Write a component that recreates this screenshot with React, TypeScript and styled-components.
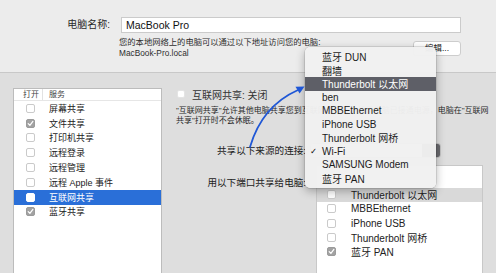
import React from "react";
import styled, { createGlobalStyle } from "styled-components";

const FONT = `"Liberation Sans", "Noto Sans CJK SC", sans-serif`;

const Global = createGlobalStyle`
  html, body { margin: 0; padding: 0; background: #dedede; }
  body { font-family: ${FONT}; }
`;

const Window = styled.div`
  position: relative;
  width: 496px;
  height: 273px;
  overflow: hidden;
  display: flex;
  flex-direction: column;
  font-family: ${FONT};
  color: #222;
  background: #dedede;
`;

const Top = styled.div`
  flex: none;
  height: 73px;
  box-sizing: border-box;
  padding-top: 17px;
  background: #ececec;
  border-bottom: 1px solid #c8c8c8;
  display: grid;
  grid-template-columns: 121px 340px;
  grid-template-rows: 16px auto;
  row-gap: 4px;
`;

const NameLabel = styled.div`
  text-align: right;
  padding-right: 11px;
  font-size: 10px;
  line-height: 16px;
  color: #2a2a2a;
`;

const TextField = styled.div`
  box-sizing: border-box;
  background: #fff;
  border: 1px solid #cbcbcb;
  padding-left: 4px;
  font-size: 10.5px;
  line-height: 14px;
  color: #111;
`;

const AddressRow = styled.div`
  grid-column: 2;
  margin-left: -2px;
  display: flex;
  justify-content: space-between;
  align-items: flex-start;
`;

const AddressText = styled.div`
  font-size: 8.3px;
  line-height: 11px;
  color: #2e2e2e;
`;

const EditButton = styled.div`
  margin-top: 4px;
  width: 48px;
  height: 15px;
  box-sizing: border-box;
  background: #fff;
  border: 1px solid #cdcdcd;
  border-radius: 3px;
  font-size: 8.5px;
  line-height: 13px;
  text-align: center;
  color: #222;
`;

const Bottom = styled.div`
  flex: 1;
  display: flex;
  align-items: flex-start;
  padding: 15px 0 0 13px;
`;

const ServiceList = styled.div`
  flex: none;
  width: 149px;
  height: 200px;
  box-sizing: border-box;
  background: #fff;
  border: 1px solid #bcbcbc;
`;

const ListHeader = styled.div`
  display: flex;
  height: 12px;
  box-sizing: border-box;
  border-bottom: 1px solid #e6e6e6;
  font-size: 8px;
  line-height: 11px;
  color: #444;
`;

const HeaderCell = styled.div<{ $w?: number; $pad: number; $divider?: boolean }>`
  width: ${(p) => (p.$w ? `${p.$w}px` : "auto")};
  padding-left: ${(p) => p.$pad}px;
  box-sizing: border-box;
  border-right: ${(p) => (p.$divider ? "1px solid #e2e2e2" : "none")};
`;

const ServiceRow = styled.div<{ $selected?: boolean }>`
  display: flex;
  align-items: center;
  height: 14.8px;
  padding-left: 12px;
  background: ${(p) => (p.$selected ? "#2a6fd8" : "transparent")};
  color: ${(p) => (p.$selected ? "#fff" : "#222")};
  font-size: 9px;
`;

const RowLabel = styled.span<{ $gap: number }>`
  margin-left: ${(p) => p.$gap}px;
  white-space: nowrap;
`;

const Box = styled.span<{ $checked?: boolean; $onBlue?: boolean; $size: number; $faint?: boolean }>`
  flex: none;
  display: inline-flex;
  align-items: center;
  justify-content: center;
  width: ${(p) => p.$size}px;
  height: ${(p) => p.$size}px;
  box-sizing: border-box;
  border-radius: 2px;
  background: ${(p) => (p.$checked ? "#a2a2a2" : "#fff")};
  border: 1px solid
    ${(p) =>
      p.$onBlue ? "#fff" : p.$checked ? "#9b9b9b" : p.$faint ? "#e4e4e4" : "#cacaca"};
`;

const Check = () => (
  <svg width="7" height="7" viewBox="0 0 7 7">
    <path d="M1.2 3.6 L2.9 5.3 L5.9 1.4" fill="none" stroke="#fff" strokeWidth="1.2" strokeLinecap="round" strokeLinejoin="round" />
  </svg>
);

const RightPane = styled.div`
  margin-left: 14px;
  width: 307px;
  display: flex;
  flex-direction: column;
`;

const TitleRow = styled.div`
  display: flex;
  align-items: center;
  height: 12px;
  padding-left: 1px;
  font-size: 10px;
  color: #333;
`;

const Description = styled.div`
  margin-top: 5.5px;
  font-size: 8px;
  line-height: 10px;
  color: #2a2a2a;
  white-space: nowrap;
`;

const Form = styled.div`
  margin-top: 17.5px;
  display: grid;
  grid-template-columns: 130px auto;
  column-gap: 4px;
  row-gap: 7px;
  align-items: start;
`;

const FormLabel = styled.div<{ $top: number }>`
  margin-top: ${(p) => p.$top}px;
  text-align: right;
  font-size: 9.6px;
  line-height: 15px;
  color: #222;
  white-space: nowrap;
`;

const Popup = styled.div`
  width: 131px;
  height: 15px;
  box-sizing: border-box;
  display: flex;
  justify-content: flex-end;
  background: #fff;
  border: 1px solid #c4c4c4;
  border-radius: 3px;
  overflow: hidden;
`;

const PopupCap = styled.div`
  width: 18px;
  background: #6a6a6e;
`;

const PortList = styled.div`
  margin-left: 6px;
  width: 167px;
  height: 120px;
  box-sizing: border-box;
  background: #fff;
  border: 1px solid #c8c8c8;
  padding-top: 21.5px;
`;

const PortRow = styled.div<{ $selected?: boolean }>`
  display: flex;
  align-items: center;
  height: 14.3px;
  padding-left: 10px;
  background: ${(p) => (p.$selected ? "#d9d9d9" : "transparent")};
  font-size: 10px;
  color: #222;
`;

const Menu = styled.div`
  position: absolute;
  left: 305px;
  top: 47px;
  width: 131px;
  padding: 3px 0;
  background: rgba(241, 241, 241, 0.97);
  border-radius: 5px;
  box-shadow: 0 3px 10px rgba(0, 0, 0, 0.3), 0 0 0 0.5px rgba(0, 0, 0, 0.18);
`;

const MenuItem = styled.div<{ $active?: boolean }>`
  display: flex;
  align-items: center;
  height: 13.5px;
  font-size: 10px;
  background: ${(p) => (p.$active ? "#5e5f67" : "transparent")};
  color: ${(p) => (p.$active ? "#fff" : "#1c1c1c")};
  white-space: nowrap;
`;

const CheckSlot = styled.span`
  width: 17px;
  flex: none;
  text-align: center;
  font-family: "DejaVu Sans", sans-serif;
  font-size: 8.5px;
  color: #111;
`;

const Overlay = styled.svg`
  position: absolute;
  left: 0;
  top: 0;
  pointer-events: none;
`;

const services = [
  { name: "屏幕共享", on: false },
  { name: "文件共享", on: true },
  { name: "打印机共享", on: false },
  { name: "远程登录", on: false },
  { name: "远程管理", on: false },
  { name: "远程 Apple 事件", on: false },
  { name: "互联网共享", on: false, selected: true },
  { name: "蓝牙共享", on: true },
];

const menuItems = [
  { name: "蓝牙 DUN" },
  { name: "翻墙" },
  { name: "Thunderbolt 以太网", active: true },
  { name: "ben" },
  { name: "MBBEthernet" },
  { name: "iPhone USB" },
  { name: "Thunderbolt 网桥" },
  { name: "Wi-Fi", checked: true },
  { name: "SAMSUNG Modem" },
  { name: "蓝牙 PAN" },
];

const ports = [
  { name: "Thunderbolt 以太网", selected: true },
  { name: "MBBEthernet" },
  { name: "iPhone USB" },
  { name: "Thunderbolt 网桥" },
  { name: "蓝牙 PAN", on: true },
];

export default function App() {
  return (
    <>
      <Global />
      <Window>
        <Top>
          <NameLabel>电脑名称:</NameLabel>
          <TextField>MacBook Pro</TextField>
          <AddressRow>
            <AddressText>
              您的本地网络上的电脑可以通过以下地址访问您的电脑:
              <br />
              MacBook-Pro.local
            </AddressText>
            <EditButton>编辑...</EditButton>
          </AddressRow>
        </Top>
        <Bottom>
          <ServiceList>
            <ListHeader>
              <HeaderCell $w={29} $pad={9} $divider>打开</HeaderCell>
              <HeaderCell $pad={6}>服务</HeaderCell>
            </ListHeader>
            {services.map((s) => (
              <ServiceRow key={s.name} $selected={s.selected}>
                <Box $size={9} $checked={s.on} $onBlue={s.selected}>
                  {s.on && <Check />}
                </Box>
                <RowLabel $gap={14}>{s.name}</RowLabel>
              </ServiceRow>
            ))}
          </ServiceList>
          <RightPane>
            <TitleRow>
              <Box $size={8} $faint />
              <RowLabel $gap={7}>互联网共享: 关闭</RowLabel>
            </TitleRow>
            <Description>
              "互联网共享"允许其他电脑共享您到互联网的连接。如果电脑已接通电源，电脑在"互联网
              <br />
              共享"打开时不会休眠。
            </Description>
            <Form>
              <FormLabel $top={0}>共享以下来源的连接:</FormLabel>
              <Popup>
                <PopupCap />
              </Popup>
              <FormLabel $top={9.5}>用以下端口共享给电脑:</FormLabel>
              <PortList>
                {ports.map((p) => (
                  <PortRow key={p.name} $selected={p.selected}>
                    <Box $size={9} $checked={p.on}>
                      {p.on && <Check />}
                    </Box>
                    <RowLabel $gap={15}>{p.name}</RowLabel>
                  </PortRow>
                ))}
              </PortList>
            </Form>
          </RightPane>
        </Bottom>
        <Menu>
          {menuItems.map((m) => (
            <MenuItem key={m.name} $active={m.active}>
              <CheckSlot>{m.checked ? "✓" : ""}</CheckSlot>
              {m.name}
            </MenuItem>
          ))}
        </Menu>
        <Overlay width="496" height="273" viewBox="0 0 496 273">
          <path d="M250 147 Q 262 106 298 90" fill="none" stroke="#1f57d6" strokeWidth="1.8" strokeLinecap="round" />
          <path d="M304.5 86.5 L295.5 86.8 L299.6 93.6 Z" fill="#1f57d6" />
        </Overlay>
      </Window>
    </>
  );
}
